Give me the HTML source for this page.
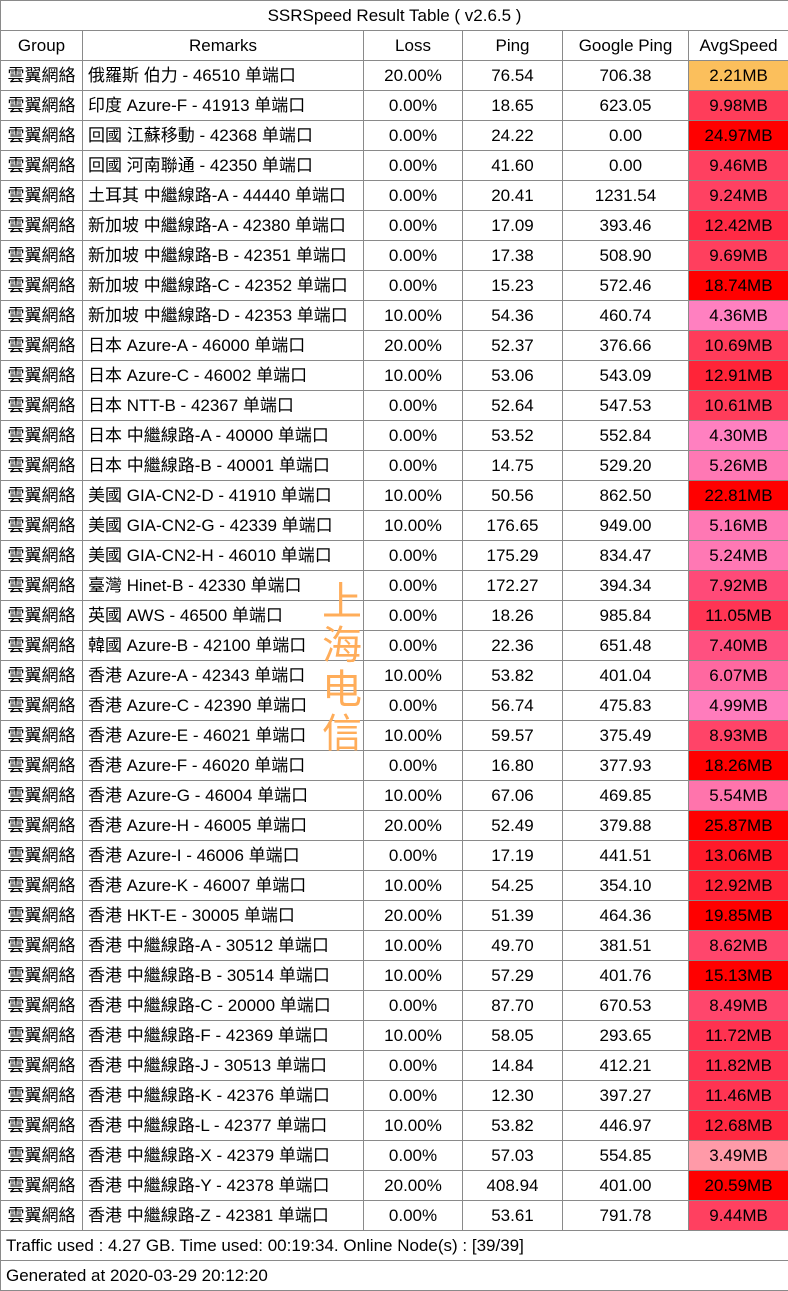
<!DOCTYPE html>
<html><head><meta charset="utf-8"><style>
body{margin:0;width:788px;height:1290px;background:#fff;font-family:"Liberation Sans","Noto Sans CJK SC",sans-serif;font-size:17px;color:#000;position:relative;overflow:hidden}
table{border-collapse:collapse;position:absolute;left:0;top:0;width:788px;table-layout:fixed}
td{border:1px solid #8a8a8a;height:29px;padding:0;text-align:center;white-space:nowrap;overflow:hidden;line-height:29px}
td.l{text-align:left;padding-left:5px}
.wm{position:absolute;left:320px;top:576px;width:44px;font-family:"Noto Sans CJK SC",sans-serif;font-size:40px;line-height:44px;color:#ffad5a;text-align:center}
</style></head><body>
<table>
<colgroup><col style="width:82px"><col style="width:281px"><col style="width:99px"><col style="width:100px"><col style="width:126px"><col style="width:100px"></colgroup>
<tr><td colspan="6">SSRSpeed Result Table ( v2.6.5 )</td></tr>
<tr><td>Group</td><td>Remarks</td><td>Loss</td><td>Ping</td><td>Google Ping</td><td>AvgSpeed</td></tr>
<tr><td>雲翼網絡</td><td class="l">俄羅斯 伯力 - 46510 单端口</td><td>20.00%</td><td>76.54</td><td>706.38</td><td style="background:#fbbf5c">2.21MB</td></tr>
<tr><td>雲翼網絡</td><td class="l">印度 Azure-F - 41913 单端口</td><td>0.00%</td><td>18.65</td><td>623.05</td><td style="background:#ff3d5a">9.98MB</td></tr>
<tr><td>雲翼網絡</td><td class="l">回國 江蘇移動 - 42368 单端口</td><td>0.00%</td><td>24.22</td><td>0.00</td><td style="background:#ff0000">24.97MB</td></tr>
<tr><td>雲翼網絡</td><td class="l">回國 河南聯通 - 42350 单端口</td><td>0.00%</td><td>41.60</td><td>0.00</td><td style="background:#ff4060">9.46MB</td></tr>
<tr><td>雲翼網絡</td><td class="l">土耳其 中繼線路-A - 44440 单端口</td><td>0.00%</td><td>20.41</td><td>1231.54</td><td style="background:#ff4162">9.24MB</td></tr>
<tr><td>雲翼網絡</td><td class="l">新加坡 中繼線路-A - 42380 单端口</td><td>0.00%</td><td>17.09</td><td>393.46</td><td style="background:#ff2a44">12.42MB</td></tr>
<tr><td>雲翼網絡</td><td class="l">新加坡 中繼線路-B - 42351 单端口</td><td>0.00%</td><td>17.38</td><td>508.90</td><td style="background:#ff3f5e">9.69MB</td></tr>
<tr><td>雲翼網絡</td><td class="l">新加坡 中繼線路-C - 42352 单端口</td><td>0.00%</td><td>15.23</td><td>572.46</td><td style="background:#ff0000">18.74MB</td></tr>
<tr><td>雲翼網絡</td><td class="l">新加坡 中繼線路-D - 42353 单端口</td><td>10.00%</td><td>54.36</td><td>460.74</td><td style="background:#ff80c0">4.36MB</td></tr>
<tr><td>雲翼網絡</td><td class="l">日本 Azure-A - 46000 单端口</td><td>20.00%</td><td>52.37</td><td>376.66</td><td style="background:#ff3c5a">10.69MB</td></tr>
<tr><td>雲翼網絡</td><td class="l">日本 Azure-C - 46002 单端口</td><td>10.00%</td><td>53.06</td><td>543.09</td><td style="background:#ff2438">12.91MB</td></tr>
<tr><td>雲翼網絡</td><td class="l">日本 NTT-B - 42367 单端口</td><td>0.00%</td><td>52.64</td><td>547.53</td><td style="background:#ff3c5a">10.61MB</td></tr>
<tr><td>雲翼網絡</td><td class="l">日本 中繼線路-A - 40000 单端口</td><td>0.00%</td><td>53.52</td><td>552.84</td><td style="background:#ff80c0">4.30MB</td></tr>
<tr><td>雲翼網絡</td><td class="l">日本 中繼線路-B - 40001 单端口</td><td>0.00%</td><td>14.75</td><td>529.20</td><td style="background:#ff78b4">5.26MB</td></tr>
<tr><td>雲翼網絡</td><td class="l">美國 GIA-CN2-D - 41910 单端口</td><td>10.00%</td><td>50.56</td><td>862.50</td><td style="background:#ff0000">22.81MB</td></tr>
<tr><td>雲翼網絡</td><td class="l">美國 GIA-CN2-G - 42339 单端口</td><td>10.00%</td><td>176.65</td><td>949.00</td><td style="background:#ff78b4">5.16MB</td></tr>
<tr><td>雲翼網絡</td><td class="l">美國 GIA-CN2-H - 46010 单端口</td><td>0.00%</td><td>175.29</td><td>834.47</td><td style="background:#ff78b4">5.24MB</td></tr>
<tr><td>雲翼網絡</td><td class="l">臺灣 Hinet-B - 42330 单端口</td><td>0.00%</td><td>172.27</td><td>394.34</td><td style="background:#ff4a78">7.92MB</td></tr>
<tr><td>雲翼網絡</td><td class="l">英國 AWS - 46500 单端口</td><td>0.00%</td><td>18.26</td><td>985.84</td><td style="background:#ff3554">11.05MB</td></tr>
<tr><td>雲翼網絡</td><td class="l">韓國 Azure-B - 42100 单端口</td><td>0.00%</td><td>22.36</td><td>651.48</td><td style="background:#ff5080">7.40MB</td></tr>
<tr><td>雲翼網絡</td><td class="l">香港 Azure-A - 42343 单端口</td><td>10.00%</td><td>53.82</td><td>401.04</td><td style="background:#ff68a0">6.07MB</td></tr>
<tr><td>雲翼網絡</td><td class="l">香港 Azure-C - 42390 单端口</td><td>0.00%</td><td>56.74</td><td>475.83</td><td style="background:#ff7cbc">4.99MB</td></tr>
<tr><td>雲翼網絡</td><td class="l">香港 Azure-E - 46021 单端口</td><td>10.00%</td><td>59.57</td><td>375.49</td><td style="background:#ff4468">8.93MB</td></tr>
<tr><td>雲翼網絡</td><td class="l">香港 Azure-F - 46020 单端口</td><td>0.00%</td><td>16.80</td><td>377.93</td><td style="background:#ff0000">18.26MB</td></tr>
<tr><td>雲翼網絡</td><td class="l">香港 Azure-G - 46004 单端口</td><td>10.00%</td><td>67.06</td><td>469.85</td><td style="background:#ff74ac">5.54MB</td></tr>
<tr><td>雲翼網絡</td><td class="l">香港 Azure-H - 46005 单端口</td><td>20.00%</td><td>52.49</td><td>379.88</td><td style="background:#ff0000">25.87MB</td></tr>
<tr><td>雲翼網絡</td><td class="l">香港 Azure-I - 46006 单端口</td><td>0.00%</td><td>17.19</td><td>441.51</td><td style="background:#ff1a2a">13.06MB</td></tr>
<tr><td>雲翼網絡</td><td class="l">香港 Azure-K - 46007 单端口</td><td>10.00%</td><td>54.25</td><td>354.10</td><td style="background:#ff2438">12.92MB</td></tr>
<tr><td>雲翼網絡</td><td class="l">香港 HKT-E - 30005 单端口</td><td>20.00%</td><td>51.39</td><td>464.36</td><td style="background:#ff0000">19.85MB</td></tr>
<tr><td>雲翼網絡</td><td class="l">香港 中繼線路-A - 30512 单端口</td><td>10.00%</td><td>49.70</td><td>381.51</td><td style="background:#ff466c">8.62MB</td></tr>
<tr><td>雲翼網絡</td><td class="l">香港 中繼線路-B - 30514 单端口</td><td>10.00%</td><td>57.29</td><td>401.76</td><td style="background:#ff0000">15.13MB</td></tr>
<tr><td>雲翼網絡</td><td class="l">香港 中繼線路-C - 20000 单端口</td><td>0.00%</td><td>87.70</td><td>670.53</td><td style="background:#ff466c">8.49MB</td></tr>
<tr><td>雲翼網絡</td><td class="l">香港 中繼線路-F - 42369 单端口</td><td>10.00%</td><td>58.05</td><td>293.65</td><td style="background:#ff3250">11.72MB</td></tr>
<tr><td>雲翼網絡</td><td class="l">香港 中繼線路-J - 30513 单端口</td><td>0.00%</td><td>14.84</td><td>412.21</td><td style="background:#ff3250">11.82MB</td></tr>
<tr><td>雲翼網絡</td><td class="l">香港 中繼線路-K - 42376 单端口</td><td>0.00%</td><td>12.30</td><td>397.27</td><td style="background:#ff3452">11.46MB</td></tr>
<tr><td>雲翼網絡</td><td class="l">香港 中繼線路-L - 42377 单端口</td><td>10.00%</td><td>53.82</td><td>446.97</td><td style="background:#ff2840">12.68MB</td></tr>
<tr><td>雲翼網絡</td><td class="l">香港 中繼線路-X - 42379 单端口</td><td>0.00%</td><td>57.03</td><td>554.85</td><td style="background:#ff9aa8">3.49MB</td></tr>
<tr><td>雲翼網絡</td><td class="l">香港 中繼線路-Y - 42378 单端口</td><td>20.00%</td><td>408.94</td><td>401.00</td><td style="background:#ff0000">20.59MB</td></tr>
<tr><td>雲翼網絡</td><td class="l">香港 中繼線路-Z - 42381 单端口</td><td>0.00%</td><td>53.61</td><td>791.78</td><td style="background:#ff4060">9.44MB</td></tr>
<tr><td colspan="6" class="l">Traffic used : 4.27 GB. Time used: 00:19:34. Online Node(s) : [39/39]</td></tr>
<tr><td colspan="6" class="l">Generated at 2020-03-29 20:12:20</td></tr>
</table>
<div class="wm">上<br>海<br>电<br>信</div>
</body></html>
